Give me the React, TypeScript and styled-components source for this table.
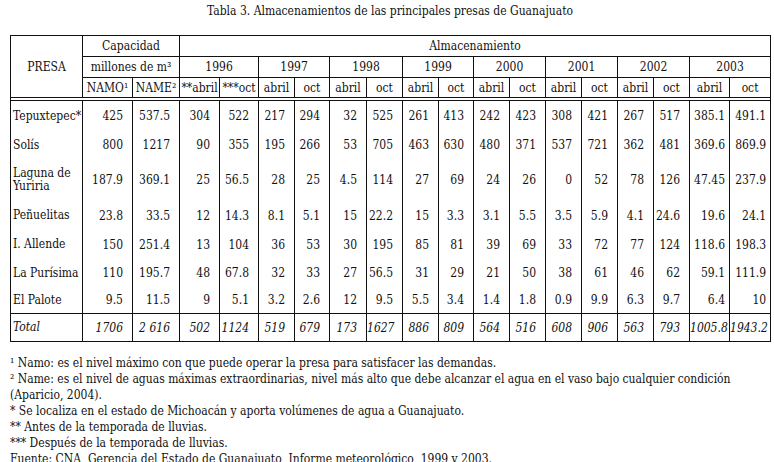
import React from "react";
import styled, { createGlobalStyle } from "styled-components";

const serif = `"DejaVu Serif Condensed", "DejaVu Serif", serif`;

const GlobalStyle = createGlobalStyle`
  html, body {
    margin: 0;
    padding: 0;
    background: #fff;
  }
  body, table, th, td {
    font-family: ${serif};
    font-stretch: semi-condensed;
    color: #111;
  }
`;

const colWidths = [72, 50, 47, 40, 39, 36, 35, 37, 36, 36, 35, 36, 36, 36, 36, 36, 36, 40, 41];
const years = ["1996", "1997", "1998", "1999", "2000", "2001", "2002", "2003"];

const rows: { name: React.ReactNode; h: number; values: string[] }[] = [
  { name: "Tepuxtepec*", h: 31, values: ["425", "537.5", "304", "522", "217", "294", "32", "525", "261", "413", "242", "423", "308", "421", "267", "517", "385.1", "491.1"] },
  { name: "Solís", h: 27, values: ["800", "1217", "90", "355", "195", "266", "53", "705", "463", "630", "480", "371", "537", "721", "362", "481", "369.6", "869.9"] },
  { name: <>Laguna de<br />Yuriria</>, h: 42, values: ["187.9", "369.1", "25", "56.5", "28", "25", "4.5", "114", "27", "69", "24", "26", "0", "52", "78", "126", "47.45", "237.9"] },
  { name: "Peñuelitas", h: 30, values: ["23.8", "33.5", "12", "14.3", "8.1", "5.1", "15", "22.2", "15", "3.3", "3.1", "5.5", "3.5", "5.9", "4.1", "24.6", "19.6", "24.1"] },
  { name: "I. Allende", h: 28, values: ["150", "251.4", "13", "104", "36", "53", "30", "195", "85", "81", "39", "69", "33", "72", "77", "124", "118.6", "198.3"] },
  { name: "La Purísima", h: 29, values: ["110", "195.7", "48", "67.8", "32", "33", "27", "56.5", "31", "29", "21", "50", "38", "61", "46", "62", "59.1", "111.9"] },
  { name: "El Palote", h: 26, values: ["9.5", "11.5", "9", "5.1", "3.2", "2.6", "12", "9.5", "5.5", "3.4", "1.4", "1.8", "0.9", "9.9", "6.3", "9.7", "6.4", "10"] },
];

const totals = ["1706", "2 616", "502", "1124", "519", "679", "173", "1627", "886", "809", "564", "516", "608", "906", "563", "793", "1005.8", "1943.2"];

export default function App() {
  return (
    <>
      <GlobalStyle />
      <Page>
        <Title>Tabla 3. Almacenamientos de las principales presas de Guanajuato</Title>
        <Table>
          <colgroup>
            {colWidths.map((w, i) => (
              <col key={i} style={{ width: w }} />
            ))}
          </colgroup>
          <thead>
            <HeadRow $h={21}>
              <HeadCell rowSpan={3}>PRESA</HeadCell>
              <HeadCell colSpan={2}>Capacidad</HeadCell>
              <HeadCell colSpan={16}>Almacenamiento</HeadCell>
            </HeadRow>
            <HeadRow $h={21}>
              <HeadCell colSpan={2}>millones de m³</HeadCell>
              {years.map((y) => (
                <HeadCell key={y} colSpan={2}>{y}</HeadCell>
              ))}
            </HeadRow>
            <HeadRow $h={20}>
              <HeadCell $tight>NAMO¹</HeadCell>
              <HeadCell $tight>NAME²</HeadCell>
              <HeadCell $tight>**abril</HeadCell>
              <HeadCell $tight>***oct</HeadCell>
              {years.slice(1).map((y) => (
                <React.Fragment key={y}>
                  <HeadCell>abril</HeadCell>
                  <HeadCell>oct</HeadCell>
                </React.Fragment>
              ))}
            </HeadRow>
          </thead>
          <tbody>
            <tr>
              <Spacer colSpan={19} />
            </tr>
            {rows.map((r, i) => (
              <BodyRow key={i} $h={r.h}>
                <NameCell>{r.name}</NameCell>
                {r.values.map((v, j) => (
                  <NumCell key={j} $wide={j >= 16}>{v}</NumCell>
                ))}
              </BodyRow>
            ))}
            <TotalRow>
              <NameCell>Total</NameCell>
              {totals.map((v, j) => (
                <NumCell key={j} $wide={j >= 16}>{v}</NumCell>
              ))}
            </TotalRow>
          </tbody>
        </Table>
        <Notes>
          <p>¹ Namo: es el nivel máximo con que puede operar la presa para satisfacer las demandas.</p>
          <p>
            ² Name: es el nivel de aguas máximas extraordinarias, nivel más alto que debe alcanzar el agua en el vaso bajo cualquier condición
            <br />
            (Aparicio, 2004).
          </p>
          <p>* Se localiza en el estado de Michoacán y aporta volúmenes de agua a Guanajuato.</p>
          <p>** Antes de la temporada de lluvias.</p>
          <p>*** Después de la temporada de lluvias.</p>
          <p>Fuente: CNA, Gerencia del Estado de Guanajuato, Informe meteorológico, 1999 y 2003.</p>
        </Notes>
      </Page>
    </>
  );
}

const Page = styled.div`
  width: 760px;
  padding: 3px 4px 0 10px;
`;

const Title = styled.div`
  text-align: center;
  font-size: 12px;
  line-height: 16px;
  margin-bottom: 16px;
`;

const Table = styled.table`
  width: 760px;
  table-layout: fixed;
  border-collapse: collapse;
  font-size: 12px;
  border: 1px solid #111;
`;

const HeadRow = styled.tr<{ $h: number }>`
  height: ${(p) => p.$h}px;
`;

const HeadCell = styled.th<{ $tight?: boolean }>`
  border: 1px solid #111;
  font-weight: normal;
  text-align: center;
  padding: 0 ${(p) => (p.$tight ? 0 : 2)}px;
  white-space: nowrap;
  line-height: 14px;
`;

const Spacer = styled.td`
  height: 2px;
  padding: 0;
  border-top: 1px solid #111;
  border-bottom: 1px solid #111;
`;

const BodyRow = styled.tr<{ $h: number }>`
  height: ${(p) => p.$h}px;
`;

const TotalRow = styled.tr`
  height: 28px;
  font-style: italic;
  td {
    border-top: 1px solid #111;
  }
`;

const NameCell = styled.td`
  padding: 0 0 0 2px;
  text-align: left;
  line-height: 13px;
  white-space: nowrap;
  border-left: 1px solid #111;
  border-right: 1px solid #111;
`;

const NumCell = styled.td<{ $wide?: boolean }>`
  padding: 0 ${(p) => (p.$wide ? 4 : 9)}px 0 0;
  text-align: right;
  white-space: nowrap;
  border-left: 1px solid #111;
  border-right: 1px solid #111;
`;

const Notes = styled.div`
  margin-top: 13px;
  font-size: 12px;
  line-height: 16px;
  white-space: nowrap;
  p {
    margin: 0;
  }
`;
